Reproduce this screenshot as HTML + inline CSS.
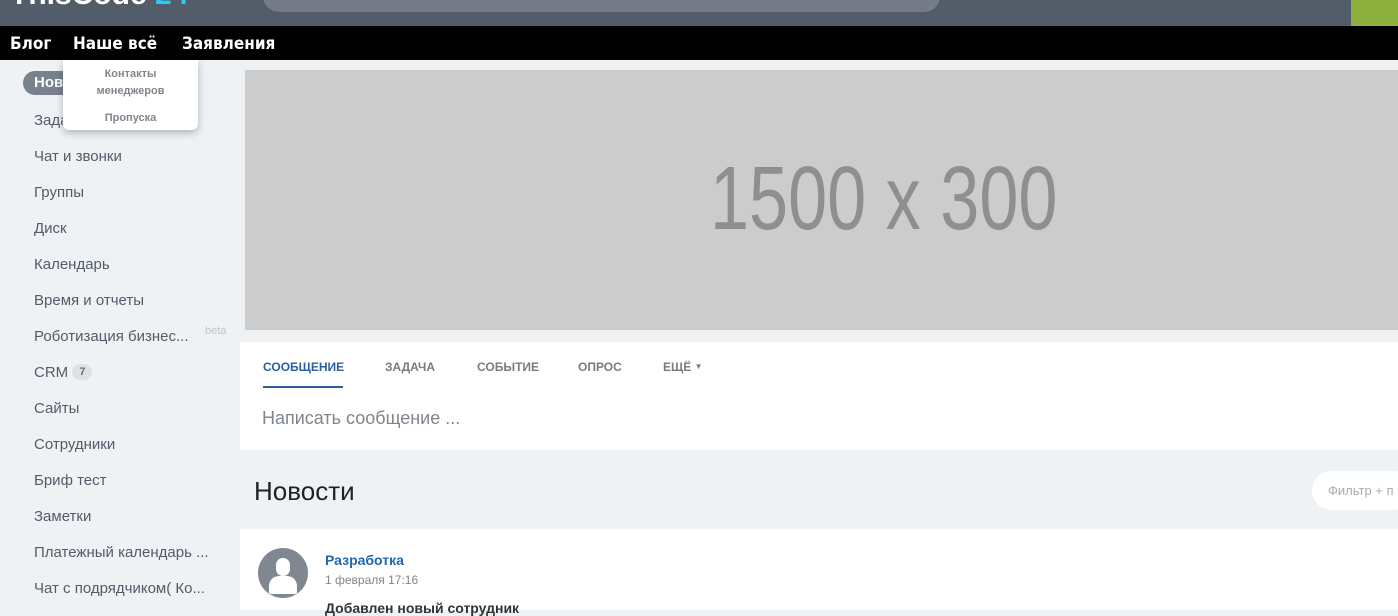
<!DOCTYPE html>
<html><head><meta charset="utf-8"><style>
*{margin:0;padding:0;box-sizing:border-box}
body{width:1398px;height:610px;overflow:hidden;background:#eef2f4;font-family:"Liberation Sans",sans-serif;position:relative}
.top{position:absolute;left:0;top:0;width:1398px;height:26px;background:#535c69;overflow:hidden}
.logo{position:absolute;left:10px;top:-22px;font-size:30px;font-weight:bold;color:#fff}
.logo span{color:#2fc6f6}
.search{position:absolute;left:263px;top:-20px;width:677px;height:32px;border-radius:16px;background:#747b87}
.green{position:absolute;left:1351px;top:0;width:47px;height:26px;background:#8eb03e}
.nav{position:absolute;left:0;top:26px;width:1398px;height:34px;background:#000;color:#fff;font-weight:bold;font-size:17px;font-family:"DejaVu Sans Condensed","Liberation Sans",sans-serif}
.nav span{position:absolute;top:8px}
.side{position:absolute;left:34px;font-size:15px;color:#525c69}
.pill{position:absolute;left:23px;top:71px;width:80px;height:24px;border-radius:12px;background:#79818c;color:#fff;font-weight:bold;font-size:15px;padding:3px 0 0 11px}
.dd{position:absolute;left:63px;top:60px;width:135px;height:70px;background:#fff;border-radius:0 0 6px 6px;box-shadow:0 3px 8px rgba(0,0,0,.25);text-align:center;font-size:11px;font-weight:bold;color:#80868e;line-height:17px}
.banner{position:absolute;left:245px;top:70px;width:1153px;height:260px;background:#cccccc}
.btxt{position:absolute;left:465px;top:84px;font-size:90px;line-height:90px;color:#8f8f8f;transform:scaleX(0.78);transform-origin:0 0;white-space:nowrap}
.form{position:absolute;left:240px;top:342px;width:1158px;height:108px;background:#fff}
.tab{position:absolute;top:18px;font-size:12px;font-weight:bold;color:#777c83}
.card{position:absolute;left:240px;top:529px;width:1158px;height:81px;background:#fff}
</style></head><body>
<div class="top"><div class="logo">ThisCode <span>24</span></div><div class="search"></div><div class="green"></div></div>
<div class="nav"><span style="left:10px">Блог</span><span style="left:73px">Наше всё</span><span style="left:182px">Заявления</span></div>
<div class="pill">Нов</div>
<div class="side" style="top:112px">Задачи</div>
<div class="side" style="top:148px">Чат и звонки</div>
<div class="side" style="top:184px">Группы</div>
<div class="side" style="top:220px">Диск</div>
<div class="side" style="top:256px">Календарь</div>
<div class="side" style="top:292px">Время и отчеты</div>
<div class="side" style="top:328px">Роботизация бизнес...</div>
<div style="position:absolute;left:205px;top:325px;font-size:11px;color:#c0c5ca">beta</div>
<div class="side" style="top:364px">CRM <span style="display:inline-block;background:#dfe2e5;border-radius:9px;font-size:11px;font-weight:bold;padding:2px 7px;vertical-align:2px;color:#6b7178">7</span></div>
<div class="side" style="top:400px">Сайты</div>
<div class="side" style="top:436px">Сотрудники</div>
<div class="side" style="top:472px">Бриф тест</div>
<div class="side" style="top:508px">Заметки</div>
<div class="side" style="top:544px">Платежный календарь ...</div>
<div class="side" style="top:580px">Чат с подрядчиком( Ко...</div>
<div class="dd"><div style="padding-top:6px">Контакты<br>менеджеров</div><div style="margin-top:10px">Пропуска</div></div>
<div class="banner"><div class="btxt">1500 x 300</div></div>
<div class="form">
<div class="tab" style="left:23px;color:#2b5fa3">СООБЩЕНИЕ</div>
<div style="position:absolute;left:23px;top:44px;width:80px;height:2px;background:#2b5fa3"></div>
<div class="tab" style="left:145px">ЗАДАЧА</div>
<div class="tab" style="left:237px">СОБЫТИЕ</div>
<div class="tab" style="left:338px">ОПРОС</div>
<div class="tab" style="left:423px">ЕЩЁ <span style="font-size:8px;vertical-align:2px">▼</span></div>
<div style="position:absolute;left:22px;top:66px;font-size:18px;color:#7f858c">Написать сообщение ...</div>
</div>
<div style="position:absolute;left:254px;top:476px;font-size:26px;color:#222;font-weight:300">Новости</div>
<div style="position:absolute;left:1312px;top:471px;width:100px;height:39px;border-radius:20px;background:#fff;font-size:13px;color:#a8adb3;padding:12px 0 0 16px;white-space:nowrap">Фильтр + п</div>
<div class="card">
<div style="position:absolute;left:18px;top:19px;width:50px;height:50px;border-radius:25px;background:#7f8790;overflow:hidden"><div style="position:absolute;left:18px;top:10px;width:14px;height:18px;border-radius:7px;background:#fff"></div><div style="position:absolute;left:11px;top:28px;width:28px;height:18px;border-radius:10px 10px 2px 2px;background:#fff"></div></div>
<div style="position:absolute;left:85px;top:23px;font-size:14px;font-weight:bold;color:#2067b0">Разработка</div>
<div style="position:absolute;left:85px;top:44px;font-size:12px;color:#80868e">1 февраля 17:16</div>
<div style="position:absolute;left:85px;top:71px;font-size:14px;font-weight:bold;color:#333">Добавлен новый сотрудник</div>
</div>
</body></html>
